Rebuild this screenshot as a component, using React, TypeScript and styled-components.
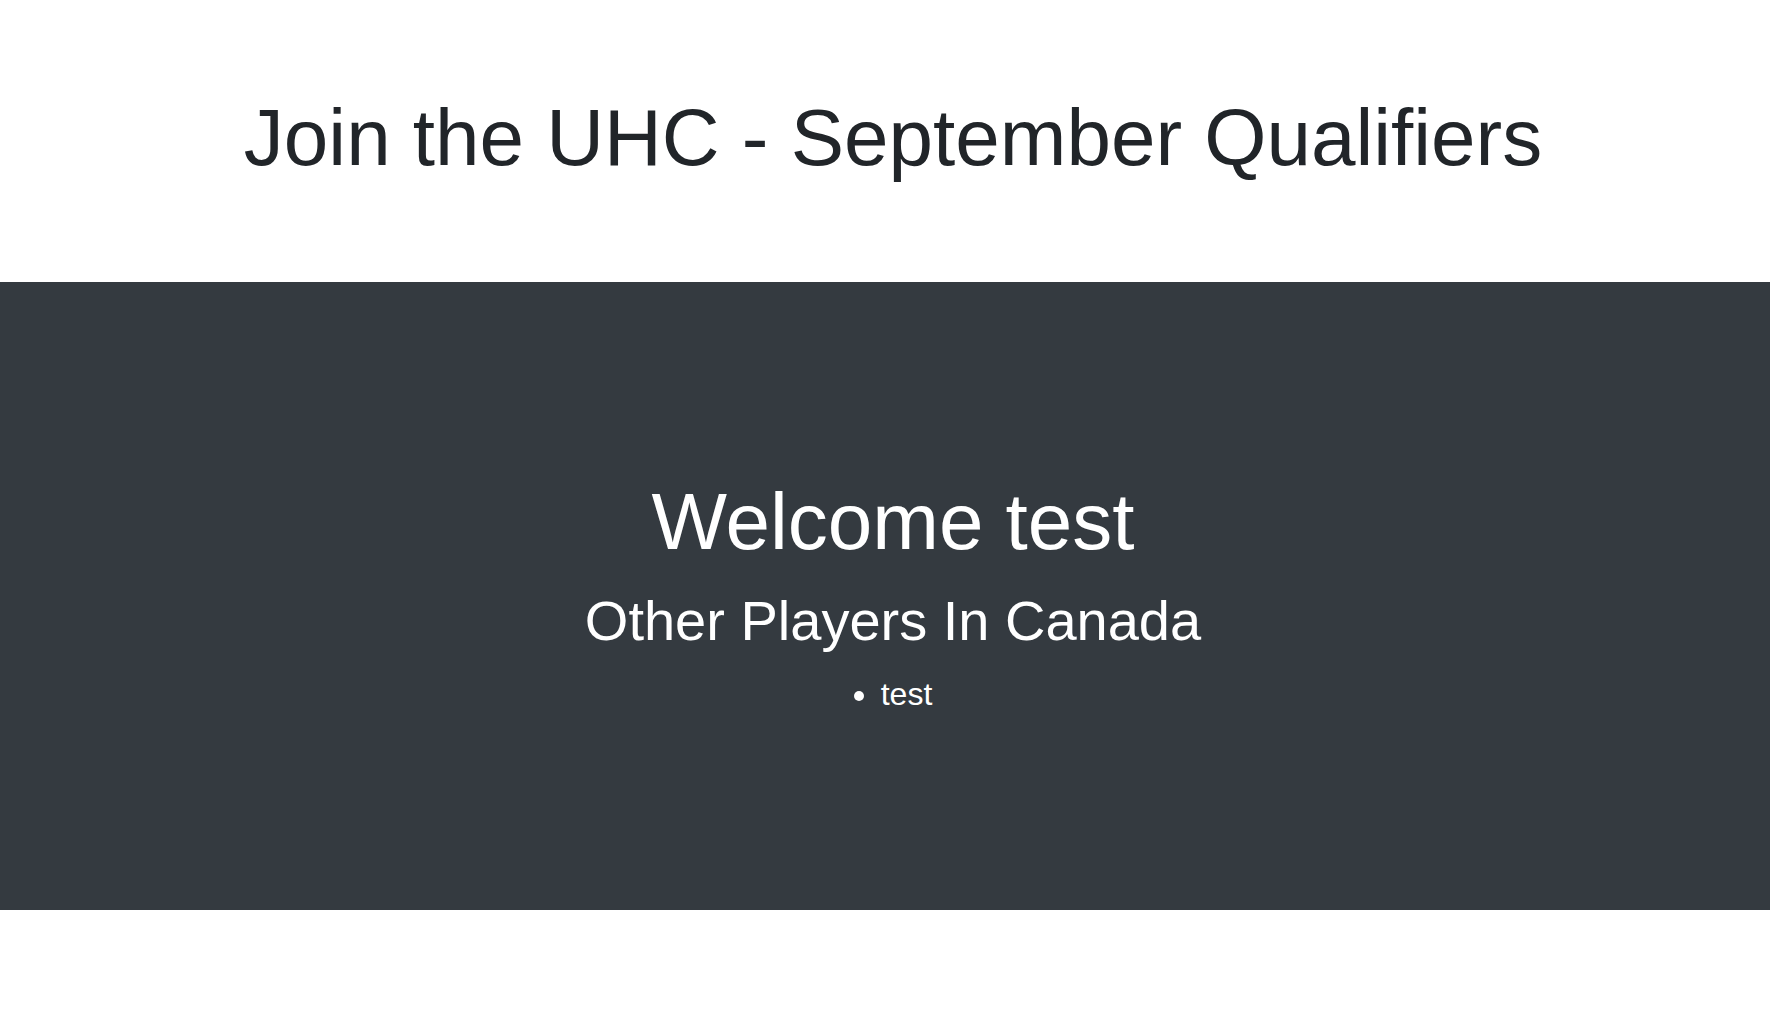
import React from "react";
import styled, { createGlobalStyle } from "styled-components";

const GlobalStyle = createGlobalStyle`
  html, body {
    margin: 0;
    padding: 0;
    background: #ffffff;
    font-family: "Liberation Sans", Arial, sans-serif;
  }
  * { box-sizing: border-box; }
`;

const Page = styled.div`
  display: flex;
  flex-direction: column;
  width: 100%;
  min-height: 1014px;
`;

const Header = styled.header`
  height: 282px;
  padding: 90px 0 0 16px;
`;

const Title = styled.h1`
  margin: 0;
  font-size: 80px;
  line-height: 1.2;
  font-weight: 400;
  color: #212529;
  text-align: center;
`;

const Band = styled.section`
  height: 628px;
  background: #343a40;
  color: #ffffff;
  display: flex;
  flex-direction: column;
  justify-content: center;
  align-items: stretch;
  padding-left: 16px;
`;

const Welcome = styled.h2`
  margin: 0 0 17px;
  font-size: 80px;
  line-height: 1.2;
  font-weight: 400;
  text-align: center;
`;

const Subtitle = styled.h3`
  margin: 0 0 16px;
  font-size: 56px;
  line-height: 1.2;
  font-weight: 400;
  text-align: center;
`;

const PlayerList = styled.ul`
  margin: 0;
  padding: 0;
  list-style: none;
  font-size: 32px;
  line-height: 1.5;
  text-align: center;
`;

const Player = styled.li`
  &::before {
    content: "";
    display: inline-block;
    width: 10px;
    height: 10px;
    border-radius: 50%;
    background: #ffffff;
    margin-right: 17px;
    vertical-align: 4px;
  }
`;

export default function App() {
  const players = ["test"];
  return (
    <>
      <GlobalStyle />
      <Page>
        <Header>
          <Title>Join the UHC - September Qualifiers</Title>
        </Header>
        <Band>
          <Welcome>Welcome test</Welcome>
          <Subtitle>Other Players In Canada</Subtitle>
          <PlayerList>
            {players.map((p) => (
              <Player key={p}>{p}</Player>
            ))}
          </PlayerList>
        </Band>
      </Page>
    </>
  );
}
